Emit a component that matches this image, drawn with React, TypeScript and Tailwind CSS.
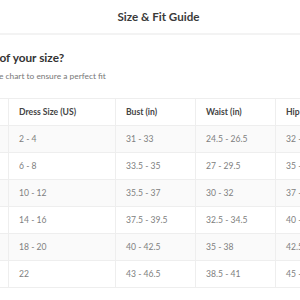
import React from 'react';

const rows = [
  ['XS', '2 - 4', '31 - 33', '24.5 - 26.5', '32 - 34'],
  ['S', '6 - 8', '33.5 - 35', '27 - 29.5', '35 - 37'],
  ['M', '10 - 12', '35.5 - 37', '30 - 32', '37 - 39'],
  ['L', '14 - 16', '37.5 - 39.5', '32.5 - 34.5', '40 - 42'],
  ['XL', '18 - 20', '40 - 42.5', '35 - 38', '42.5 - 45'],
  ['XXL', '22', '43 - 46.5', '38.5 - 41', '45 - 48'],
];

const headers = ['Size', 'Dress Size (US)', 'Bust (in)', 'Waist (in)', 'Hip (in)'];

const App: React.FC = () => {
  return (
    <div
      className="w-[300px] h-[300px] overflow-hidden bg-white"
      style={{ fontFamily: 'Lato, "Open Sans", sans-serif' }}
    >
      <div className="h-[35px] flex items-center justify-center pl-[17px] border-b-2 border-[#f3f3f3]">
        <span className="text-[11.6px] font-bold text-[#3a3a3a]">Size &amp; Fit Guide</span>
      </div>

      <div className="ml-[-41px] w-[400px]">
        <div className="pt-[15px]">
          <h2 className="text-[11.8px] leading-[16px] font-bold text-[#333]">Unsure of your size?</h2>
          <p className="mt-[4px] text-[8.4px] leading-[12px] text-[#777]">
            Use our size chart to ensure a perfect fit
          </p>
        </div>

        <div className="mt-[16px] border-t border-[#eee]">
          <div className="grid grid-cols-[50px_107px_80px_80px_80px] h-[27px] border-b border-[#eee] bg-white">
            {headers.map((h) => (
              <div
                key={h}
                className="flex items-center px-[10px] border-r border-[#eee] text-[8.6px] font-bold text-[#444] whitespace-nowrap"
              >
                {h}
              </div>
            ))}
          </div>
          {rows.map((r, i) => (
            <div
              key={r[0]}
              className={
                'grid grid-cols-[50px_107px_80px_80px_80px] h-[27px] border-b border-[#eee] ' +
                (i % 2 === 0 ? 'bg-[#fafafa]' : 'bg-white')
              }
            >
              {r.map((c, j) => (
                <div
                  key={j}
                  className="flex items-center px-[10px] border-r border-[#eee] text-[8.6px] text-[#808080] whitespace-nowrap"
                >
                  {c}
                </div>
              ))}
            </div>
          ))}
        </div>
      </div>
    </div>
  );
};

export default App;
